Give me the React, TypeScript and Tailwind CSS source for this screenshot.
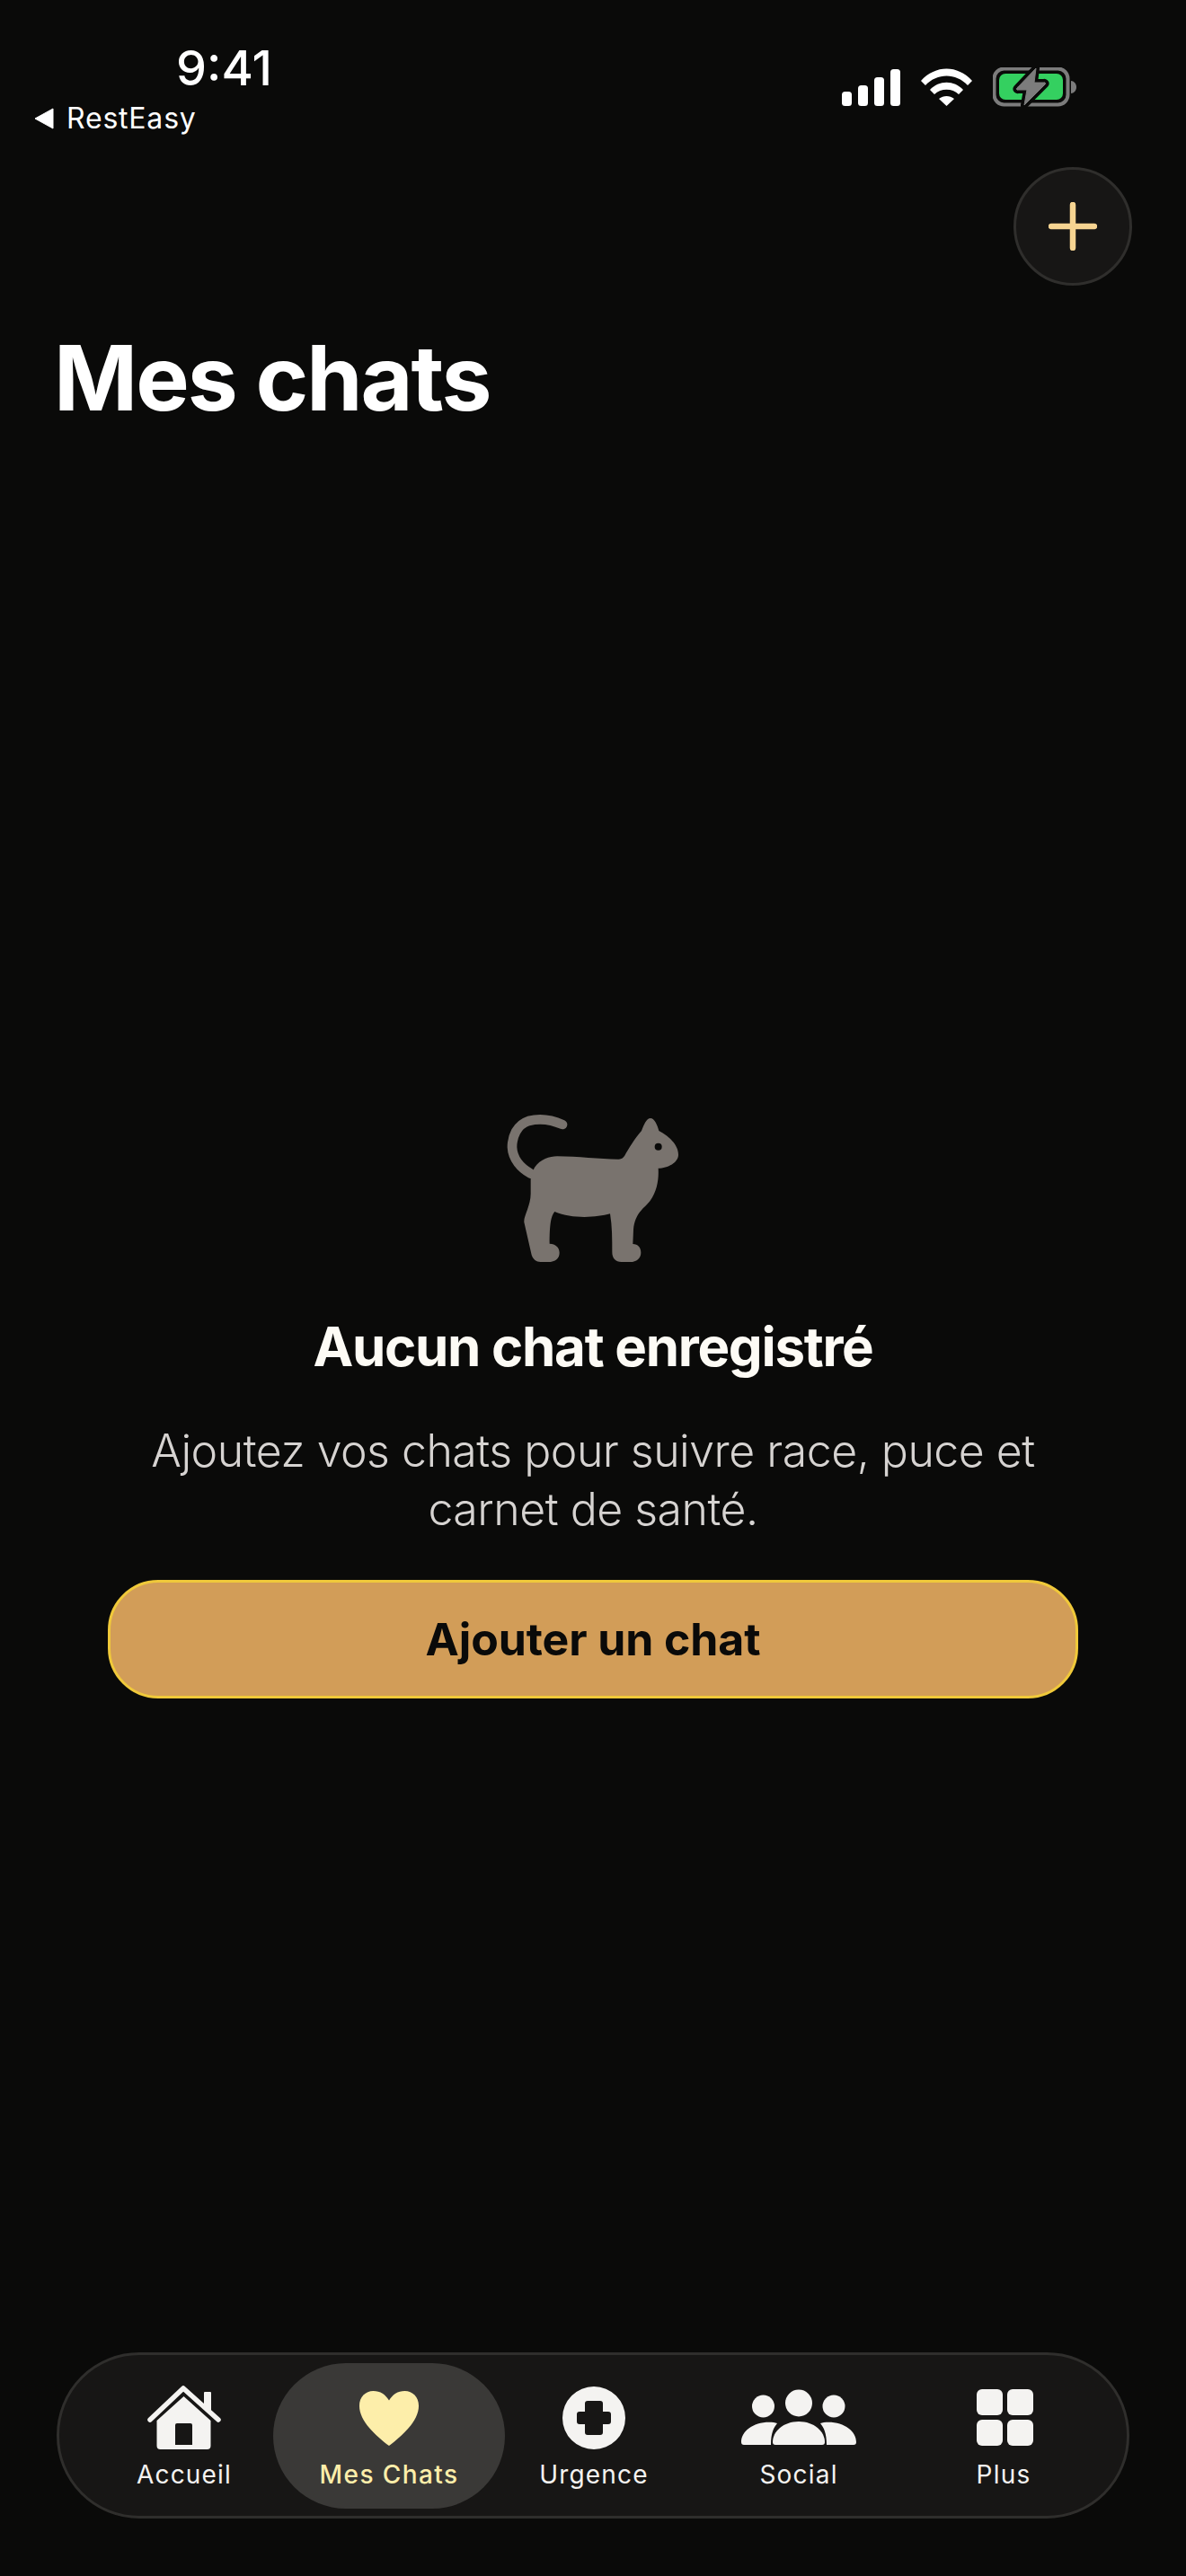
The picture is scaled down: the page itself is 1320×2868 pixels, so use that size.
const navItems = [
  { label: "Accueil", icon: "home" },
  { label: "Mes Chats", icon: "heart", active: true },
  { label: "Urgence", icon: "urgent" },
  { label: "Social", icon: "social" },
  { label: "Plus", icon: "grid" },
];

function NavIcon({ name }: { name: string }) {
  if (name === "home") {
    return (
      <svg width="82" height="74" viewBox="0 0 82 74" fill="none" aria-hidden="true">
        <path d="M3 39 40 4 79 39" stroke="#f4f3f1" strokeWidth="5.500" strokeLinecap="round" strokeLinejoin="round" />
        <path d="M64 8h6a1 1 0 0 1 1 1v21l-8-7V9a1 1 0 0 1 1-1z" fill="#f4f3f1" />
        <path fillRule="evenodd" clipRule="evenodd" d="M40.500 13 70.500 40v28a4 4 0 0 1-4 4h-52a4 4 0 0 1-4-4V40zM31 45v22h19V45a2 2 0 0 0-2-2H33a2 2 0 0 0-2 2z" fill="#f4f3f1" />
      </svg>
    );
  }
  if (name === "heart") {
    return (
      <svg width="68" height="64" viewBox="0 0 70 64" aria-hidden="true">
        <path d="M35 64C20 52 1 36 1 18 1 8 8 1 17 1c8 0 14 4 18 11C39 5 45 1 53 1c9 0 16 7 16 17 0 18-19 34-34 46z" fill="#fdeeaa" />
      </svg>
    );
  }
  if (name === "urgent") {
    return (
      <svg width="70" height="70" viewBox="0 0 70 70" aria-hidden="true">
        <path fillRule="evenodd" clipRule="evenodd" d="M35 0a35 35 0 1 1 0 70 35 35 0 0 1 0-70zM28 16a3 3 0 0 0-3 3v9h-6a3 3 0 0 0-3 3v8a3 3 0 0 0 3 3h6v9a3 3 0 0 0 3 3h14a3 3 0 0 0 3-3v-9h6a3 3 0 0 0 3-3v-8a3 3 0 0 0-3-3h-6v-9a3 3 0 0 0-3-3z" fill="#f4f3f1" />
      </svg>
    );
  }
  if (name === "social") {
    return (
      <svg width="130" height="63" viewBox="0 0 130 63" aria-hidden="true">
        <g fill="#f4f3f1">
          <circle cx="25.500" cy="19" r="12.500" />
          <circle cx="65" cy="15.500" r="15" />
          <circle cx="104" cy="19" r="12.500" />
          <path d="M37 37a24 24 0 0 1 4 1c-4 5-7 11-7 24H4a3 3 0 0 1-3-3c0-13 15-24 36-22z" />
          <path d="M93 37a24 24 0 0 0-4 1c4 5 7 11 7 24h30a3 3 0 0 0 3-3c0-13-15-24-36-22z" />
          <path d="M65 36c17 0 29 11 29 23a3 3 0 0 1-3 3H39a3 3 0 0 1-3-3c0-12 12-23 29-23z" />
        </g>
      </svg>
    );
  }
  return (
    <div className="ml-[2px] grid grid-cols-2 gap-[5px]">
      <div className="h-[29px] w-[29px] rounded-[6px] bg-[#f4f3f1]" />
      <div className="h-[29px] w-[29px] rounded-[6px] bg-[#f4f3f1]" />
      <div className="h-[29px] w-[29px] rounded-[6px] bg-[#f4f3f1]" />
      <div className="h-[29px] w-[29px] rounded-[6px] bg-[#f4f3f1]" />
    </div>
  );
}

function CatIcon() {
  return (
    <svg width="280" height="220" viewBox="0 0 840 660" aria-hidden="true">
      <path d="M318 129C280 112 240 108 205 117 165 130 150 170 150 205 152 245 180 275 212 293" fill="none" stroke="#79736e" strokeWidth="32" strokeLinecap="round" />
      <path d="M225 272C245 245 275 235 300 235 370 235 440 245 505 245 520 245 525 235 530 225 545 200 560 175 582 150 590 130 598 108 612 108 625 108 635 130 640 150 670 165 705 195 705 230 705 255 670 275 638 275 640 310 635 350 610 385 590 410 560 425 555 480L553 528C570 528 580 540 580 557 580 575 565 588 545 588L515 588C495 588 484 575 484 555 484 510 484 470 477 427 430 440 350 445 292 420 280 435 275 460 275 527 295 527 308 540 308 557 308 575 295 588 270 588L245 588C230 588 220 580 215 565L190 455C188 435 212 400 212 360L212 300Z" fill="#79736e" />
      <circle cx="638" cy="203" r="12" fill="#0a0a09" />
    </svg>
  );
}

function StatusIcons() {
  const bolt = "M48 1 27 23a1 1 0 0 0 1 2h10l-3 17 23-23a1 1 0 0 0-1-2H46z";
  return (
    <div className="flex items-center">
      <svg width="65" height="41" viewBox="0 0 65 41" aria-hidden="true">
        <g fill="#fff">
          <rect x="0" y="25" width="11" height="16" rx="3.500" />
          <rect x="18" y="18" width="11" height="23" rx="3.500" />
          <rect x="36" y="9" width="11" height="32" rx="3.500" />
          <rect x="54" y="0" width="11" height="41" rx="3.500" />
        </g>
      </svg>
      <svg className="ml-[23px]" width="57" height="42" viewBox="0 0 57 42" aria-hidden="true">
        <g fill="#fff">
          <path d="M0 14C16-4 41-4 57 14l-5 5C39 5 18 5 5 19z" />
          <path d="M10 24c10-11 27-11 37 0l-5 5c-7-7-20-7-27 0z" />
          <path d="M20 34c5-4 12-4 17 0l-8.500 8z" />
        </g>
      </svg>
      <svg className="ml-[23px]" width="93" height="44" viewBox="0 0 93 44" aria-hidden="true">
        <rect x="1.500" y="1.500" width="82" height="40" rx="11" fill="none" stroke="#7c7c7c" strokeWidth="4" />
        <path d="M87 15c3 0 6 3 6 7s-3 7-6 7z" fill="#7c7c7c" />
        <rect x="7" y="7" width="71" height="29" rx="7" fill="#34d060" />
        <path d={bolt} fill="#0a0a09" stroke="#0a0a09" strokeWidth="8" strokeLinejoin="round" />
        <path d={bolt} fill="#7c7c7c" stroke="#7c7c7c" strokeWidth="1" strokeLinejoin="round" />
      </svg>
    </div>
  );
}

export default function App() {
  return (
    <div className="flex h-[2868px] w-[1320px] flex-col overflow-hidden bg-[#0a0a09] font-['Inter',sans-serif] text-white">
      <header className="flex items-start justify-between pl-[38px] pr-[122px] pt-[47px]">
        <div>
          <div className="ml-[158px] text-[54px] font-medium leading-[58px]">9:41</div>
          <div className="mt-[8px] flex items-center gap-[14px] text-[32px] leading-[38px] tracking-[0.8px]">
            <svg width="22" height="24" viewBox="0 0 22 24" aria-hidden="true">
              <path d="M21 1v22L1 12z" fill="#fff" stroke="#fff" strokeLinejoin="round" />
            </svg>
            RestEasy
          </div>
        </div>
        <div className="pt-[28px]">
          <StatusIcons />
        </div>
      </header>

      <div className="mt-[35px] flex justify-end pr-[60px]">
        <button className="flex h-[132px] w-[132px] items-center justify-center rounded-full border-[3px] border-[#2f2e2c] bg-[#171615]">
          <svg width="54" height="54" viewBox="0 0 54 54" fill="none" aria-hidden="true">
            <path d="M27 3v48M3 27h48" stroke="#f6d491" strokeWidth="6.500" strokeLinecap="round" />
          </svg>
        </button>
      </div>

      <h1 className="ml-[60px] mt-[43px] text-[100px] font-bold leading-[120px] tracking-[-2px]">Mes chats</h1>

      <main className="flex flex-1 flex-col items-center">
        <div className="mt-[728px]">
          <CatIcon />
        </div>
        <h2 className="mt-[34px] text-[60px] font-bold leading-[72px] tracking-[-1.3px] text-[#fdfbf5]">Aucun chat enregistré</h2>
        <p className="mt-[48px] w-[1020px] text-center text-[50px] font-[350] leading-[65px] tracking-[-0.5px] text-[#d6d3d1]">
          Ajoutez vos chats pour suivre race, puce et carnet de santé.
        </p>
        <button className="mt-[46px] h-[132px] w-[1080px] rounded-[56px] border-[3px] border-[#f0c93a] bg-[#d29d58] text-[50px] font-bold tracking-[-0.1px] text-[#0a0a09]">
          Ajouter un chat
        </button>
      </main>

      <nav className="mx-[63px] mb-[64px] grid h-[185px] grid-cols-5 items-center rounded-[92px] border-[3px] border-[#2f2e2c] bg-[#171615] pl-[25px] pr-[23px]">
        {navItems.map((item) => (
          <div
            key={item.label}
            className={
              item.active
                ? "-mx-[15px] flex h-[162px] flex-col items-center rounded-[81px] bg-[#3a3937] pt-[25px]"
                : "flex h-[162px] flex-col items-center pt-[25px]"
            }
          >
            <div className="flex h-[72px] items-center">
              <NavIcon name={item.icon} />
            </div>
            <span
              className={
                item.active
                  ? "mt-[8px] text-[28px] font-medium leading-[38px] tracking-[1.4px] text-[#fdeeaa]"
                  : "mt-[8px] text-[28px] font-normal leading-[38px] tracking-[1.2px] text-[#f4f3f1]"
              }
            >
              {item.label}
            </span>
          </div>
        ))}
      </nav>
    </div>
  );
}
